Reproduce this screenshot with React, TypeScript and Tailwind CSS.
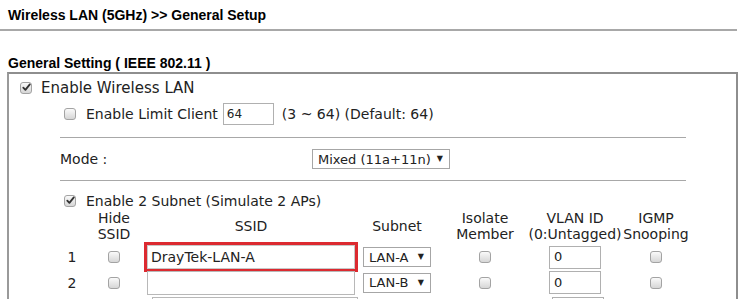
import React from "react";

function Check({ checked = false }: { checked?: boolean }) {
  return (
    <span className="relative inline-block w-[12px] h-[12px] shrink-0 rounded-[3px] border border-[#a3a3a3] bg-linear-to-b from-[#fafafa] to-[#d6d6d6]">
      {checked && (
        <svg viewBox="0 0 12 12" className="absolute left-[0px] top-[-1px] w-[11px] h-[11px]">
          <path d="M2.5 6.2 L4.8 8.6 L9.6 2.6" fill="none" stroke="#333" strokeWidth="2" strokeLinecap="round" strokeLinejoin="round" />
        </svg>
      )}
    </span>
  );
}

function Select({ text, w }: { text: string; w: string }) {
  return (
    <div className={`flex items-center justify-between h-[20px] border border-[#a6a6a6] bg-white pl-[5px] pr-[6px] text-[13px] leading-none ${w}`}>
      <span>{text}</span>
      <span className="text-[8px]">▼</span>
    </div>
  );
}

export default function App() {
  return (
    <div className="w-[750px] h-[299px] overflow-hidden bg-white text-[#222]" style={{ fontFamily: '"DejaVu Sans", Verdana, sans-serif' }}>
      <div className="pl-[8px] pt-[7px] pb-[6px] text-[14px] leading-[16px] font-bold text-black" style={{ fontFamily: '"Liberation Sans", Arial, sans-serif' }}>
        Wireless LAN (5GHz) &gt;&gt; General Setup
      </div>
      <div className="w-[737px] h-[2px] bg-[#a8a8a8]" />
      <div className="pl-[8px] mt-[24px] text-[14px] leading-[16px] font-bold text-black" style={{ fontFamily: '"Liberation Sans", Arial, sans-serif' }}>
        General Setting ( IEEE 802.11 )
      </div>
      <div className="ml-[7px] mt-[1px] w-[731px] h-[240px] border-2 border-b-0 border-[#8e8e8e] border-l-[#9a9a9a]">
        <div className="flex items-center h-[28px] pl-[11px] gap-[9px] text-[15px]">
          <Check checked />
          <span>Enable Wireless LAN</span>
        </div>
        <div className="ml-[51px] w-[626px] text-[14px]">
          <div className="flex items-center h-[24px] pl-[4px]">
            <Check />
            <span className="ml-[10px]">Enable Limit Client</span>
            <div className="ml-[5px] w-[51px] h-[22px] border border-[#b0b0b0] flex items-center pl-[3px] text-[12px]">64</div>
            <span className="ml-[8px]">(3 ~ 64) (Default: 64)</span>
          </div>
          <div className="mt-[11px] h-[1px] bg-[#a8a8a8]" />
          <div className="flex items-center h-[42px]">
            <span className="w-[252px]">Mode :</span>
            <Select text="Mixed (11a+11n)" w="w-[138px]" />
          </div>
          <div className="h-[1px] bg-[#a8a8a8]" />
          <div className="flex items-center mt-[11px] h-[18px] pl-[4px]">
            <Check checked />
            <span className="ml-[10px]">Enable 2 Subnet (Simulate 2 APs)</span>
          </div>
        </div>
        <div className="ml-[47px] text-[14px] leading-[16px]">
          <div className="grid grid-cols-[28px_60px_214px_78px_98px_82px_80px] h-[32px] items-center justify-items-center text-center">
            <div />
            <div>Hide<br />SSID</div>
            <div>SSID</div>
            <div>Subnet</div>
            <div>Isolate<br />Member</div>
            <div className="whitespace-nowrap">VLAN ID<br />(0:Untagged)</div>
            <div>IGMP<br />Snooping</div>
          </div>
          {["1", "2"].map((n) => (
            <div key={n} className="grid grid-cols-[28px_60px_214px_78px_98px_82px_80px] h-[27px] items-center justify-items-center">
              <div className="pl-[4px]">{n}</div>
              <Check />
              {n === "1" ? (
                <div className="w-[214px] h-[30px] border-[3px] border-[#dc2a30] p-[0px] flex">
                  <div className="flex-1 border border-[#c8c8c8] flex items-center pl-[3px]">DrayTek-LAN-A</div>
                </div>
              ) : (
                <div className="w-[208px] h-[24px] border border-[#b8b8b8]" />
              )}
              <Select text={n === "1" ? "LAN-A" : "LAN-B"} w="w-[68px]" />
              <Check />
              <div className="w-[52px] h-[23px] border border-[#b0b0b0] flex items-center pl-[4px] text-[13px]">0</div>
              <Check />
            </div>
          ))}
          <div className="grid grid-cols-[28px_60px_214px_78px_98px_82px_80px] mt-[1px] justify-items-center">
            <div />
            <div />
            <div className="w-[206px] h-[24px] border border-[#b8b8b8] ml-[8px]" />
            <div />
            <div />
            <div className="w-[52px] h-[23px] border border-[#b0b0b0] ml-[6px]" />
            <div />
          </div>
        </div>
      </div>
    </div>
  );
}
